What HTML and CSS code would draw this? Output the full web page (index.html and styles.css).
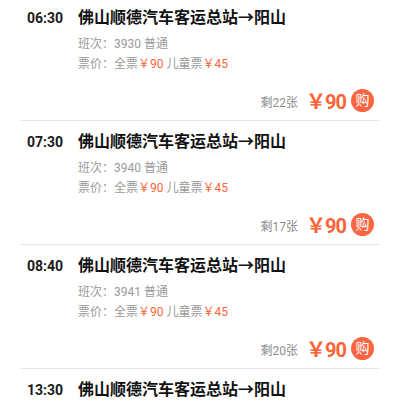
FILE: index.html
```
<!DOCTYPE html>
<html lang="zh-CN">
<head>
    <meta charset="UTF-8">
    <meta name="viewport" content="width=device-width, initial-scale=1.0">
    <title>班次列表</title>
    <link rel="stylesheet" href="styles.css">
</head>
<body>

    <ul class="trips">
        <li class="trip">
            <div class="trip-head">
                <span class="time">06:30</span>
                <span class="route">佛山顺德汽车客运总站→阳山</span>
            </div>
            <div class="trip-info first">班次：3930 普通</div>
            <div class="trip-info">票价：全票<em>￥90</em> 儿童票<em>￥45</em></div>
            <div class="trip-foot">
                <span class="left">剩22张</span>
                <span class="price">￥90</span>
                <span class="buy">购</span>
            </div>
        </li>
        <li class="trip">
            <div class="trip-head">
                <span class="time">07:30</span>
                <span class="route">佛山顺德汽车客运总站→阳山</span>
            </div>
            <div class="trip-info first">班次：3940 普通</div>
            <div class="trip-info">票价：全票<em>￥90</em> 儿童票<em>￥45</em></div>
            <div class="trip-foot">
                <span class="left">剩17张</span>
                <span class="price">￥90</span>
                <span class="buy">购</span>
            </div>
        </li>
        <li class="trip">
            <div class="trip-head">
                <span class="time">08:40</span>
                <span class="route">佛山顺德汽车客运总站→阳山</span>
            </div>
            <div class="trip-info first">班次：3941 普通</div>
            <div class="trip-info">票价：全票<em>￥90</em> 儿童票<em>￥45</em></div>
            <div class="trip-foot">
                <span class="left">剩20张</span>
                <span class="price">￥90</span>
                <span class="buy">购</span>
            </div>
        </li>
        <li class="trip">
            <div class="trip-head">
                <span class="time">13:30</span>
                <span class="route">佛山顺德汽车客运总站→阳山</span>
            </div>
        </li>
    </ul>

</body>
</html>
```

FILE: styles.css
```
* {
    box-sizing: border-box;
}

body {
    margin: 0;
    background: #fff;
    font-family: Roboto, "Noto Sans CJK SC", sans-serif;
    overflow: hidden;
}

/* list is scrolled up a little in the screenshot */
.trips {
    list-style: none;
    margin: -3px 20px 0;
    padding: 0;
}

.trip {
    padding: 11px 6px 8px 7px;
    border-bottom: 1px solid #e6e6e6;
}

.trip-head {
    display: flex;
    align-items: baseline;
    line-height: 20px;
}

.time {
    width: 51px;
    font-size: 14px;
    font-weight: bold;
    color: #1a1a1a;
}

.route {
    font-size: 16px;
    font-weight: bold;
    color: #111;
}

.trip-info {
    padding-left: 51px;
    font-size: 12px;
    line-height: 20px;
    color: #9a9a9a;
}

.trip-info.first {
    margin-top: 6px;
}

.trip-info em {
    font-style: normal;
    color: #fb6439;
}

.trip-foot {
    display: flex;
    justify-content: flex-end;
    align-items: center;
    height: 24px;
    margin-top: 14px;
}

.left {
    font-size: 12px;
    color: #8c8c8c;
    margin-right: 8px;
    padding-top: 3px;
}

.price {
    font-size: 20px;
    font-weight: bold;
    color: #fb6439;
    letter-spacing: -1px;
}

.buy {
    width: 23px;
    height: 23px;
    margin-left: 5px;
    border-radius: 50%;
    background: #fa6642;
    color: #fff;
    font-size: 14px;
    line-height: 23px;
    text-align: center;
}
```
